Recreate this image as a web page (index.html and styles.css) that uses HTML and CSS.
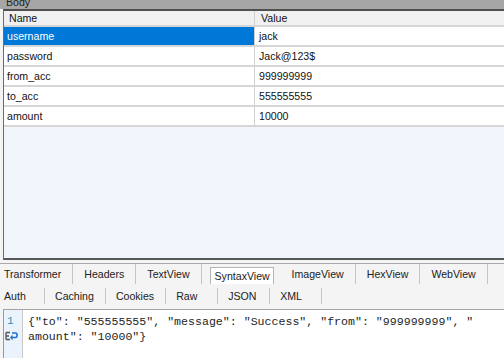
FILE: index.html
```html
<!DOCTYPE html>
<html lang="en">
<head>
  <meta charset="UTF-8">
  <title>Body</title>
  <link rel="stylesheet" href="styles.css">
</head>
<body>
  <div class="titlebar"><span>Body</span></div>

  <!-- Request body grid -->
  <div class="panel">
    <div class="row head">
      <div class="cell">Name</div>
      <div class="cell">Value</div>
    </div>
    <div class="row selected">
      <div class="cell">username</div>
      <div class="cell">jack</div>
    </div>
    <div class="row">
      <div class="cell">password</div>
      <div class="cell">Jack@123$</div>
    </div>
    <div class="row">
      <div class="cell">from_acc</div>
      <div class="cell">999999999</div>
    </div>
    <div class="row">
      <div class="cell">to_acc</div>
      <div class="cell">555555555</div>
    </div>
    <div class="row">
      <div class="cell">amount</div>
      <div class="cell">10000</div>
    </div>
  </div>

  <!-- Inspector tabs -->
  <div class="inspector">
    <div class="tabs">
      <div class="tab">Transformer</div>
      <div class="tab">Headers</div>
      <div class="tab">TextView</div>
      <div class="tab active"><span>SyntaxView</span></div>
      <div class="tab">ImageView</div>
      <div class="tab">HexView</div>
      <div class="tab">WebView</div>
    </div>
    <div class="tabs sub">
      <div class="tab">Auth</div>
      <div class="tab">Caching</div>
      <div class="tab">Cookies</div>
      <div class="tab">Raw</div>
      <div class="tab">JSON</div>
      <div class="tab">XML</div>
    </div>
  </div>

  <!-- Response text -->
  <div class="code">
    <div class="gutter">
      <div class="ln">1</div>
      <svg class="wrap-icon" width="13" height="10" viewBox="0 0 13 10">
        <path d="M1 1.5h4M1 1.5v7M1 8.5h4M1 5h3" stroke="#555" stroke-width="1.4" fill="none"/>
        <path d="M7 2h3.5a1.5 1.5 0 0 1 1.5 1.5v1.5a1.5 1.5 0 0 1 -1.5 1.5H6" stroke="#1f6fd0" stroke-width="1.6" fill="none"/>
        <path d="M7.5 3.8L5 6.5l2.5 2.7z" fill="#1f6fd0"/>
      </svg>
    </div>
    <div class="lines">
      <div class="line">{"to": "555555555", "message": "Success", "from": "999999999", "</div>
      <div class="line">amount": "10000"}</div>
    </div>
  </div>
</body>
</html>
```

FILE: styles.css
```css
body {
  margin: 0;
  width: 504px;
  height: 358px;
  overflow: hidden;
  background: #f4f4f4;
  font-family: "Liberation Sans", Arial, sans-serif;
  font-size: 10.6px;
  color: #111;
}

/* Clipped section title */
.titlebar {
  height: 9px;
  background: #a6a6a6;
  display: flex;
  align-items: flex-end;
  overflow: hidden;
  padding-left: 6px;
}

.titlebar span {
  line-height: 13px;
  color: #222;
}

.panel {
  margin-left: 3px;
  height: 247px;
  background: #f1f6fd;
  border-top: 2px solid #4f4f4f;
  border-left: 1px solid #6c6c6c;
  border-bottom: 2px solid #575757;
}

.row {
  display: grid;
  grid-template-columns: 251px 1fr;
  height: 18px;
  background: #fff;
  border-bottom: 2px solid #d6d6d6;
}

.row.head {
  height: 14px;
  background: #f0f0f0;
}

.cell {
  display: flex;
  align-items: center;
  padding-left: 3px;
  border-right: 1px solid #cfcfcf;
  white-space: nowrap;
}

.cell + .cell {
  border-right: none;
  padding-left: 4px;
}

.head .cell {
  padding-left: 5px;
}

.head .cell + .cell {
  padding-left: 6px;
}

.row.selected .cell:first-child {
  background: #0078d7;
  color: #fff;
}

/* Tabs */
.inspector {
  margin-top: 3px;
  border-top: 1px solid #a9a9a9;
  height: 45px;
}

.tabs {
  display: flex;
  height: 22px;
  align-items: stretch;
}

.tab {
  display: flex;
  align-items: center;
  padding: 0 11px;
  border-right: 1px solid #c4c4c4;
  margin: 0 0 2px;
  color: #222;
}

.tab:first-child {
  padding-left: 4px;
}

.tab.active {
  padding: 0 7px 0 8px;
  border-right: none;
}

.tab.active span {
  background: #fff;
  border: 1px solid #b4b4b4;
  border-bottom: none;
  padding: 2px 2px 0 4px;
  height: 17px;
  margin-top: 3px;
  box-sizing: border-box;
  width: 64px;
}

.tabs.sub {
  height: 21px;
}

.tabs.sub .tab {
  min-width: 52px;
  box-sizing: border-box;
  padding-left: 10px;
  margin: 2px 0 3px;
}

.tabs.sub .tab:first-child {
  min-width: 45px;
  padding-left: 4px;
}

/* Syntax view */
.code {
  margin-left: 3px;
  height: 50px;
  display: flex;
  background: #fff;
  border-top: 1px solid #a3a3a3;
  border-left: 1px solid #9a9a9a;
}

.gutter {
  width: 18px;
  background: #eaf2fb;
  border-right: 1px solid #c9c9c9;
  padding-top: 4px;
  display: flex;
  flex-direction: column;
  align-items: flex-start;
}

.ln {
  color: #2b91af;
  font-family: "Liberation Mono", monospace;
  font-size: 11px;
  line-height: 15px;
  padding-left: 3px;
}

.wrap-icon {
  margin: 2px 0 0 1px;
}

.lines {
  padding: 4px 0 0 5px;
  font-family: "Liberation Mono", "Courier New", monospace;
  font-size: 11.6px;
  line-height: 15px;
  color: #1e1e1e;
}

.line {
  white-space: pre;
}
```
